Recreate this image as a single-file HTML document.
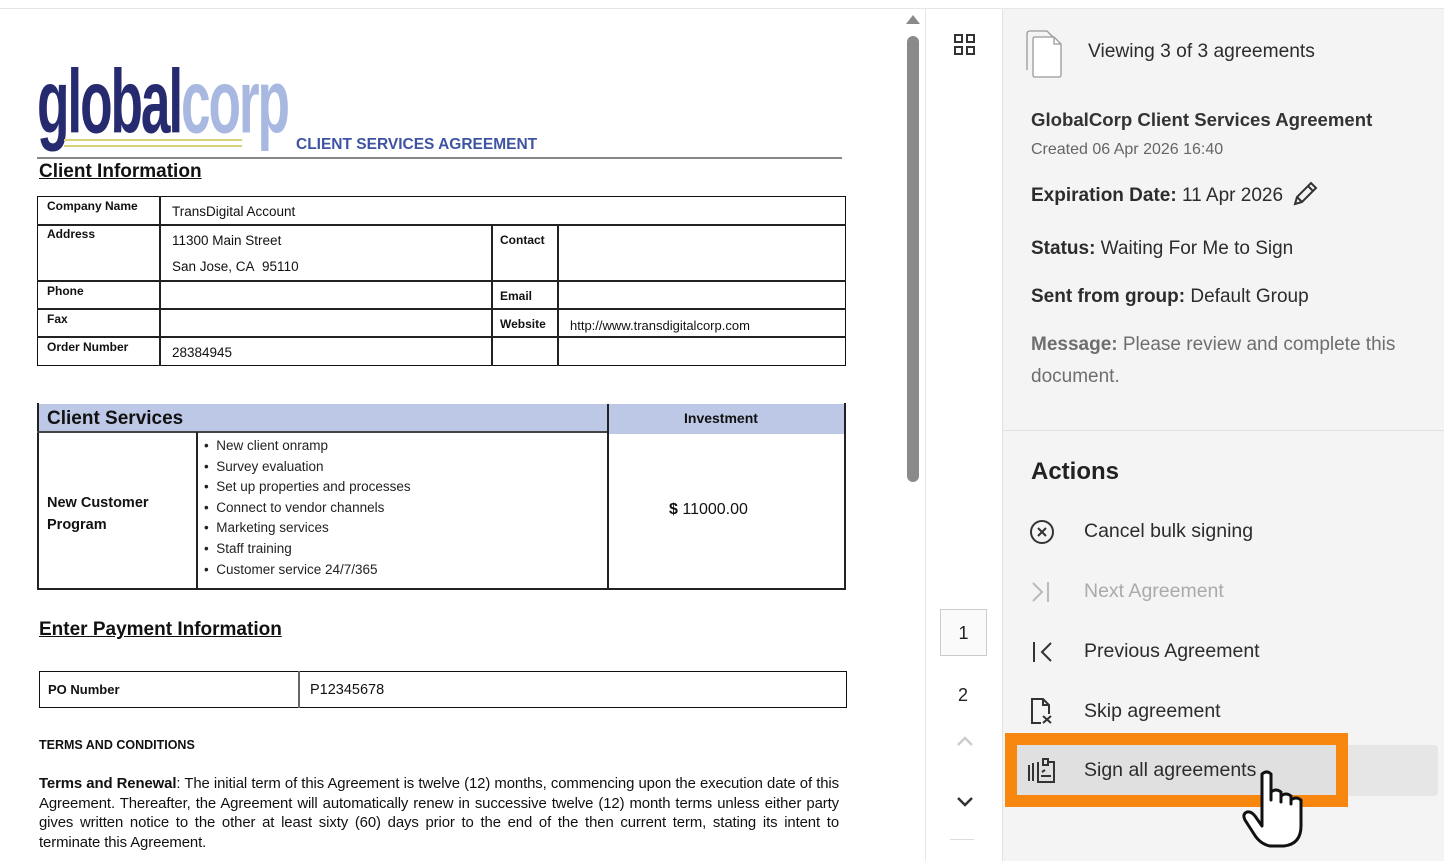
<!DOCTYPE html>
<html><head><meta charset="utf-8"><style>
*{margin:0;padding:0;box-sizing:border-box}
body{width:1444px;height:861px;overflow:hidden;background:#fff;position:relative;font-family:"Liberation Sans",sans-serif;color:#222}
.a{position:absolute;white-space:nowrap}
.c{font-family:"Liberation Sans Narrow","Liberation Sans",sans-serif}
.tb{position:absolute;border:1.5px solid #111}
.hl{position:absolute;height:1.5px;background:#222}
.vl{position:absolute;width:1.5px;background:#222}
.lab{font-size:12px;font-weight:bold;color:#111}
.val{font-size:13.5px;color:#111}
.rp{font-size:19px;color:#2c2c2c}
.rp b{color:#2c2c2c}
.act{font-size:19.5px;color:#2c2c2c}
</style></head><body>
<div class="a" style="left:0;top:8px;width:1444px;height:1px;background:#e6e6e6"></div>

<div class="a" style="left:37px;top:58px;font:bold 76px/1 'Liberation Sans',sans-serif;letter-spacing:-3px;color:#262a6e;transform-origin:0 0;transform:scale(0.7,1.18)">global<span style="color:#a9b8e0">corp</span></div>
<div class="a" style="left:64px;top:139px;width:178px;height:2px;background:#d8d27a"></div>
<div class="a" style="left:64px;top:145px;width:178px;height:2px;background:#d8d27a"></div>
<div class="a" style="left:296px;top:136px;font-size:15.5px;font-weight:bold;color:#3e54a3">CLIENT SERVICES AGREEMENT</div>
<div class="a" style="left:37px;top:157px;width:805px;height:2px;background:#888"></div>
<div class="a" style="left:39px;top:161px;font-size:19px;font-weight:bold;text-decoration:underline;color:#111">Client Information</div>

<div class="tb" style="left:37px;top:196px;width:809px;height:170px"></div>
<div class="hl" style="left:37px;top:224px;width:809px"></div>
<div class="hl" style="left:37px;top:280px;width:809px"></div>
<div class="hl" style="left:37px;top:308px;width:809px"></div>
<div class="hl" style="left:37px;top:336px;width:809px"></div>
<div class="vl" style="left:159px;top:196px;height:170px"></div>
<div class="vl" style="left:491px;top:224px;height:142px"></div>
<div class="vl" style="left:557px;top:224px;height:142px"></div>
<div class="a lab" style="left:47px;top:199px">Company Name</div>
<div class="a lab" style="left:47px;top:227px">Address</div>
<div class="a lab" style="left:47px;top:284px">Phone</div>
<div class="a lab" style="left:47px;top:312px">Fax</div>
<div class="a lab" style="left:47px;top:340px">Order Number</div>
<div class="a lab" style="left:500px;top:233px">Contact</div>
<div class="a lab" style="left:500px;top:289px">Email</div>
<div class="a lab" style="left:500px;top:317px">Website</div>
<div class="a val" style="left:172px;top:204px">TransDigital Account</div>
<div class="a val" style="left:172px;top:233px">11300 Main Street</div>
<div class="a val" style="left:172px;top:259px">San Jose, CA&nbsp; 95110</div>
<div class="a val" style="left:172px;top:345px">28384945</div>
<div class="a val" style="left:570px;top:318px;font-size:13px">http://www.transdigitalcorp.com</div>

<div class="a" style="left:37px;top:404px;width:570px;height:28px;background:#bcc8e6"></div>
<div class="a" style="left:607px;top:404px;width:238px;height:30px;background:#bcc8e6"></div>
<div class="a" style="left:37px;top:403px;width:1.5px;height:187px;background:#222"></div>
<div class="a" style="left:844px;top:403px;width:1.5px;height:187px;background:#222"></div>
<div class="hl" style="left:37px;top:588px;width:809px"></div>
<div class="hl" style="left:37px;top:431px;width:570px;background:#444"></div>
<div class="vl" style="left:196px;top:432px;height:157px"></div>
<div class="vl" style="left:607px;top:404px;height:185px"></div>
<div class="a" style="left:47px;top:408px;font-size:19px;font-weight:bold;color:#111">Client Services</div>
<div class="a" style="left:684px;top:410px;font-size:14px;font-weight:bold;color:#111">Investment</div>
<div class="a" style="left:47px;top:492px;font-size:14.5px;font-weight:bold;line-height:22px;color:#111">New Customer<br>Program</div>
<div class="a c" style="left:204px;top:436px;font-size:13.5px;line-height:20.6px;color:#222">• &nbsp;New client onramp<br>• &nbsp;Survey evaluation<br>• &nbsp;Set up properties and processes<br>• &nbsp;Connect to vendor channels<br>• &nbsp;Marketing services<br>• &nbsp;Staff training<br>• &nbsp;Customer service 24/7/365</div>
<div class="a" style="left:669px;top:501px;font-size:16px;color:#111"><b>$</b> 11000.00</div>

<div class="a" style="left:39px;top:619px;font-size:19px;font-weight:bold;text-decoration:underline;color:#111">Enter Payment Information</div>
<div class="tb" style="left:39px;top:671px;width:808px;height:37px"></div>
<div class="vl" style="left:298px;top:671px;height:37px;background:#666"></div>
<div class="a lab" style="left:48px;top:682px;font-size:13px">PO Number</div>
<div class="a val" style="left:310px;top:682px;font-size:14.5px">P12345678</div>

<div class="a" style="left:39px;top:738px;font-size:12.5px;font-weight:bold;color:#111">TERMS AND CONDITIONS</div>
<div class="a" style="left:39px;top:775px;width:800px;white-space:normal;font-size:14.9px;line-height:19.7px;color:#111;text-align:justify;letter-spacing:-0.1px"><b>Terms and Renewal</b>: The initial term of this Agreement is twelve (12) months, commencing upon the execution date of this Agreement. Thereafter, the Agreement will automatically renew in successive twelve (12) month terms unless either party gives written notice to the other at least sixty (60) days prior to the end of the then current term, stating its intent to terminate this Agreement.</div>

<div class="a" style="left:906px;top:15px;width:0;height:0;border-left:7px solid transparent;border-right:7px solid transparent;border-bottom:9px solid #8a8a8a"></div>
<div class="a" style="left:907px;top:36px;width:12px;height:446px;border-radius:6px;background:#8a8a8a"></div>
<div class="a" style="left:925px;top:9px;width:1px;height:852px;background:#e8e8e8"></div>

<svg class="a" style="left:954px;top:34px" width="22" height="22" viewBox="0 0 22 22" fill="none" stroke="#333" stroke-width="2"><rect x="1" y="1" width="7" height="7"/><rect x="13" y="1" width="7" height="7"/><rect x="1" y="13" width="7" height="7"/><rect x="13" y="13" width="7" height="7"/></svg>
<div class="a" style="left:940px;top:609px;width:47px;height:47px;border:1px solid #ccc;background:#fafafa;font-size:18px;text-align:center;line-height:47px;color:#222">1</div>
<div class="a" style="left:958px;top:685px;font-size:18px;color:#222">2</div>
<svg class="a" style="left:955px;top:734px" width="20" height="14" viewBox="0 0 20 14" fill="none" stroke="#ccc" stroke-width="2.5"><path d="M3 11 L10 4 L17 11"/></svg>
<svg class="a" style="left:955px;top:795px" width="20" height="14" viewBox="0 0 20 14" fill="none" stroke="#333" stroke-width="2.5"><path d="M3 3 L10 10 L17 3"/></svg>
<div class="a" style="left:950px;top:839px;width:24px;height:1px;background:#ddd"></div>

<div class="a" style="left:1002px;top:9px;width:442px;height:852px;background:#f4f4f4;border-left:1px solid #e2e2e2"></div>
<div class="a" style="left:1003px;top:430px;width:441px;height:1px;background:#e2e2e2"></div>
<svg class="a" style="left:1021px;top:29px" width="48" height="50" viewBox="0 0 48 50" fill="none" stroke="#999" stroke-width="1.3"><path d="M6 41 L6 5 Q6 2 9 2 L26 2 L32 8"/><path d="M12 46 L12 10 Q12 8 14 8 L33 8 L40 15 L40 46 Q40 48 38 48 L14 48 Q12 48 12 46Z" fill="#fff"/><path d="M33 8 L33 15 L40 15"/></svg>
<div class="a" style="left:1088px;top:41px;font-size:19.2px;color:#2c2c2c">Viewing 3 of 3 agreements</div>
<div class="a" style="left:1031px;top:109px;font-size:18.6px;font-weight:bold;color:#333">GlobalCorp Client Services Agreement</div>
<div class="a" style="left:1031px;top:141px;font-size:16px;color:#666">Created 06 Apr 2026 16:40</div>
<div class="a rp" style="left:1031px;top:185px"><b>Expiration Date:</b> 11 Apr 2026</div>
<svg class="a" style="left:1291px;top:180px" width="28" height="28" viewBox="0 0 28 28" fill="none" stroke="#333" stroke-width="2"><path d="M4 24 L6 17 L20 3 L25 8 L11 22 Z M17 6 L22 11 M6 17 L11 22"/></svg>
<div class="a rp" style="left:1031px;top:238px"><b>Status:</b> Waiting For Me to Sign</div>
<div class="a rp" style="left:1031px;top:286px"><b>Sent from group:</b> Default Group</div>
<div class="a rp" style="left:1031px;top:329px;color:#6e6e6e;line-height:32px"><b style="color:#6e6e6e">Message:</b> Please review and complete this<br>document.</div>

<div class="a" style="left:1031px;top:458px;font-size:24px;font-weight:bold;color:#222">Actions</div>

<svg class="a" style="left:1029px;top:519px" width="26" height="26" viewBox="0 0 26 26" fill="none" stroke="#333" stroke-width="2"><circle cx="13" cy="13" r="11"/><path d="M9 9 L17 17 M17 9 L9 17"/></svg>
<div class="a act" style="left:1084px;top:520px">Cancel bulk signing</div>
<svg class="a" style="left:1030px;top:580px" width="24" height="24" viewBox="0 0 24 24" fill="none" stroke="#bbb" stroke-width="2"><path d="M3 3 L12 12 L3 21 M18 2 L18 22"/></svg>
<div class="a act" style="left:1084px;top:580px;color:#aaa">Next Agreement</div>
<svg class="a" style="left:1030px;top:640px" width="24" height="24" viewBox="0 0 24 24" fill="none" stroke="#333" stroke-width="2"><path d="M4 2 L4 22 M21 3 L12 12 L21 21"/></svg>
<div class="a act" style="left:1084px;top:640px">Previous Agreement</div>
<svg class="a" style="left:1029px;top:697px" width="26" height="28" viewBox="0 0 26 28" fill="none" stroke="#333" stroke-width="2"><path d="M12 26 L3 26 L3 2 L14 2 L20 8 L20 17 M14 2 L14 8 L20 8 M14 19 L22 26 M22 19 L14 26"/></svg>
<div class="a act" style="left:1084px;top:700px">Skip agreement</div>

<div class="a" style="left:1005px;top:745px;width:433px;height:51px;background:#e6e6e6;border-radius:4px"></div>
<div class="a" style="left:1005px;top:733px;width:343px;height:74px;border:12px solid #f7870f;background:#e0e0e0"></div>
<svg class="a" style="left:1027px;top:757px" width="30" height="28" viewBox="0 0 30 28" fill="none" stroke="#333" stroke-width="2"><path d="M2 8 L2 24 M6 6 L6 24 M11 5 L11 25 L27 25 L27 5 L22 5"/><path d="M16 5 L16 2 L21 2 L21 8 L16 8 Z"/><path d="M14 19 L24 19 M15 15 L18 13"/></svg>
<div class="a act" style="left:1084px;top:759px">Sign all agreements</div>
<svg class="a" style="left:1240px;top:770px" width="66" height="80" viewBox="0 0 66 80"><path d="M22 4 Q27 0 31 4 L31 30 L31 22 Q36 18 41 22 L41 32 L41 26 Q46 22 51 26 L51 34 L51 30 Q56 26 61 30 L61 56 Q61 74 44 76 L30 76 Q20 74 14 64 L5 50 Q2 44 7 42 Q11 41 15 46 L22 56 Z" fill="#fff" stroke="#111" stroke-width="3" stroke-linejoin="round"/></svg>
</body></html>
